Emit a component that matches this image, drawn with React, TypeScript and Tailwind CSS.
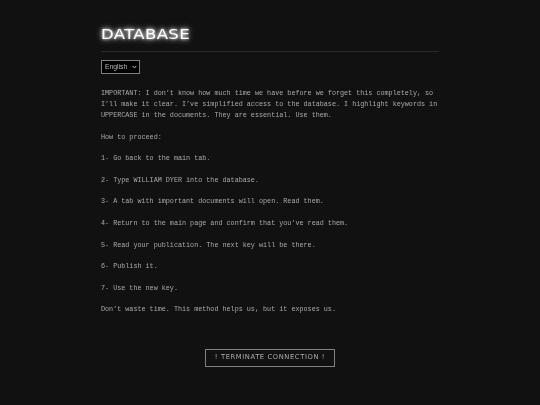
export default function App() {
  const paras = [
    "IMPORTANT: I don’t know how much time we have before we forget this completely, so I’ll make it clear. I’ve simplified access to the database. I highlight keywords in UPPERCASE in the documents. They are essential. Use them.",
    "How to proceed:",
    "1- Go back to the main tab.",
    "2- Type WILLIAM DYER into the database.",
    "3- A tab with important documents will open. Read them.",
    "4- Return to the main page and confirm that you’ve read them.",
    "5- Read your publication. The next key will be there.",
    "6- Publish it.",
    "7- Use the new key.",
    "Don’t waste time. This method helps us, but it exposes us.",
  ];
  return (
    <div className="min-h-[405px] bg-[#111111] flex flex-col items-center overflow-hidden">
      <div className="w-[338px] pt-[24px]">
        <div className="pb-[7px] border-b border-[#2a2a2a]">
          <h1 className="h-[20px] text-[14px] leading-[20px] font-normal text-white font-['DejaVu_Sans'] tracking-[0.3px] w-fit origin-left scale-x-[1.18] will-change-transform [text-shadow:0_0_3px_#ffffff,0_0_6px_#ffffff]">
            DATABASE
          </h1>
        </div>
        <div className="relative mt-[8px] w-[39px] h-[14px] blur-[0.25px]">
          <select className="block w-full h-full appearance-none rounded-none bg-black border border-[#808080] text-[#b8b8b8] text-[6.75px] font-['Liberation_Sans'] pl-[3px]">
            <option>English</option>
          </select>
          <svg className="absolute right-[3px] top-[5px] w-[5px] h-[4px] pointer-events-none" viewBox="0 0 5 4" fill="none">
            <path d="M0.7 1 L2.5 3 L4.3 1" stroke="#cccccc" strokeWidth="0.9" />
          </svg>
        </div>
        <div className="mt-[14.4px] font-['Liberation_Mono'] text-[6.75px] leading-[10.8px] text-[#aaaaaa] blur-[0.3px]">
          {paras.map((p) => (
            <p key={p} className="mb-[10.8px]">{p}</p>
          ))}
        </div>
      </div>
      <button className="mt-[22.6px] w-[130px] h-[18px] border border-[#808080] bg-[#111111] text-[#aaaaaa] text-[6.75px] tracking-[0.6px] font-['DejaVu_Sans'] blur-[0.2px]">
        ! TERMINATE CONNECTION !
      </button>
    </div>
  );
}
